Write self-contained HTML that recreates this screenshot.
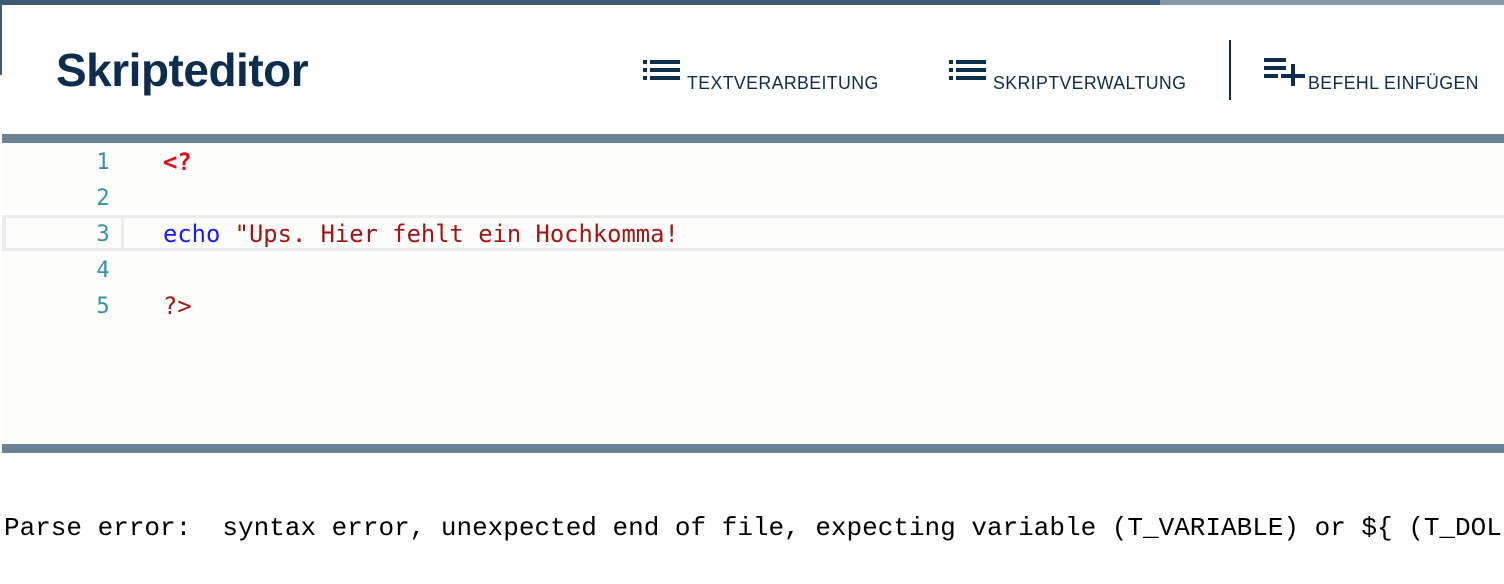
<!DOCTYPE html>
<html><head><style>
body{margin:0;width:1504px;height:584px;background:#fff;position:relative;overflow:hidden;font-family:"Liberation Sans",sans-serif}
.a{position:absolute}
.nav{position:absolute;top:72px;font-size:18.5px;color:#0d2d4f;white-space:nowrap;transform:scaleX(0.96);transform-origin:left}
.code{font-family:"DejaVu Sans Mono",monospace;font-size:23.8px}
.ln{position:absolute;left:81px;width:44px;text-align:center;color:#3690aa;font-family:"DejaVu Sans Mono",monospace;font-size:22px}
.cl{position:absolute;left:163px;white-space:pre}
</style></head><body>
<div class="a" style="left:0;top:0;width:1160px;height:5px;background:#3c5a78"></div>
<div class="a" style="left:1160px;top:0;width:344px;height:5px;background:#8797a8"></div>
<div class="a" style="left:0;top:0;width:2px;height:75px;background:#3c5a78"></div>
<div class="a" style="left:56px;top:43px;font-size:46px;font-weight:bold;color:#0d2d4f;letter-spacing:-0.5px">Skripteditor</div>

<svg class="a" style="left:643px;top:58px" width="38" height="24"><g fill="#0d2d4f"><rect x="0" y="2" width="4" height="4"/><rect x="7" y="2" width="30" height="4"/><rect x="0" y="10" width="4" height="4"/><rect x="7" y="10" width="30" height="4"/><rect x="0" y="18" width="4" height="4"/><rect x="7" y="18" width="30" height="4"/></g></svg>
<div class="nav" style="left:687px;letter-spacing:0.4px">TEXTVERARBEITUNG</div>
<svg class="a" style="left:949px;top:58px" width="38" height="24"><g fill="#0d2d4f"><rect x="0" y="2" width="4" height="4"/><rect x="7" y="2" width="30" height="4"/><rect x="0" y="10" width="4" height="4"/><rect x="7" y="10" width="30" height="4"/><rect x="0" y="18" width="4" height="4"/><rect x="7" y="18" width="30" height="4"/></g></svg>
<div class="nav" style="left:993px;letter-spacing:0.4px">SKRIPTVERWALTUNG</div>
<div class="a" style="left:1229px;top:40px;width:2px;height:60px;background:#0d2d4f"></div>
<svg class="a" style="left:1264px;top:56px" width="42" height="30"><g fill="#0d2d4f"><rect x="0" y="2" width="22" height="4"/><rect x="0" y="10" width="22" height="4"/><rect x="0" y="18" width="14" height="4"/><rect x="17" y="18" width="24" height="4"/><rect x="27" y="8" width="4" height="24"/></g></svg>
<div class="nav" style="left:1308px;letter-spacing:0.4px">BEFEHL EINFÜGEN</div>

<div class="a" style="left:2px;top:134px;width:1502px;height:9px;background:#6a8196"></div>
<div class="a" style="left:2px;top:143px;width:1502px;height:301px;background:#fdfdfb"></div>
<div class="a" style="left:2px;top:215px;width:1502px;height:36px;background:#ececec"></div>
<div class="a" style="left:6px;top:218px;width:115px;height:30px;background:#fdfdfb"></div>
<div class="a" style="left:124px;top:218px;width:1380px;height:30px;background:#fdfdfb"></div>

<div class="ln" style="top:150px">1</div>
<div class="ln" style="top:186px">2</div>
<div class="ln" style="top:222px">3</div>
<div class="ln" style="top:258px">4</div>
<div class="ln" style="top:294px">5</div>
<div class="cl code" style="top:148px;color:#e0101a;font-weight:bold">&lt;?</div>
<div class="cl code" style="top:220px"><span style="color:#1a1aff">echo</span> <span style="color:#a31515">"Ups. Hier fehlt ein Hochkomma!</span></div>
<div class="cl code" style="top:292px;color:#a31515">?&gt;</div>

<div class="a" style="left:2px;top:444px;width:1502px;height:9px;background:#6a8196"></div>
<div class="a" style="left:0;top:505px;width:1504px;height:45px;overflow:hidden">
<div style="position:absolute;left:4px;top:8px;font-family:'Liberation Mono',monospace;font-size:26px;white-space:pre;color:#000">Parse error:  syntax error, unexpected end of file, expecting variable (T_VARIABLE) or ${ (T_DOL</div>
</div>
</body></html>
